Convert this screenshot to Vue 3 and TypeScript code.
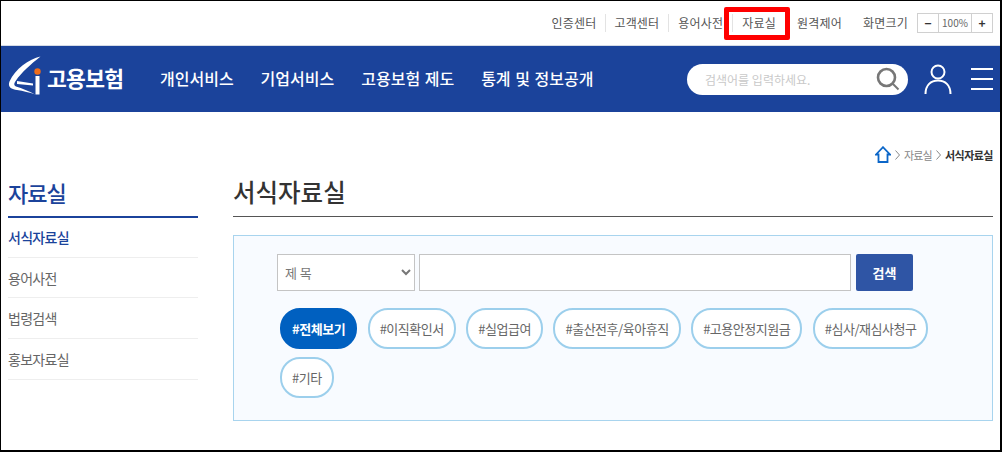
<script setup lang="ts">
const utils = [
  { label: '인증센터', cls: 'u1' },
  { label: '고객센터', cls: 'u2' },
  { label: '용어사전', cls: 'u3' },
  { label: '자료실', cls: 'u4' },
  { label: '원격제어', cls: 'u5' },
  { label: '화면크기', cls: 'u6' },
]
const navs = ['개인서비스', '기업서비스', '고용보험 제도', '통계 및 정보공개']
const sideItems = ['서식자료실', '용어사전', '법령검색', '홍보자료실']
const tags = ['#전체보기', '#이직확인서', '#실업급여', '#출산전후/육아휴직', '#고용안정지원금', '#심사/재심사청구', '#기타']
</script>

<template>
  <div class="page">
    <div class="util">
      <a v-for="u in utils" :key="u.label" class="util-item" :class="u.cls">{{ u.label }}</a>
      <div class="zoom">
        <span class="zb">−</span><span class="zv">100%</span><span class="zb">+</span>
      </div>
      <span class="redbox"></span>
    </div>
    <header class="head">
      <div class="logo">
        <svg class="mark" width="34" height="39" viewBox="0 0 34 39">
          <path d="M32.5 .5C21 3 7 13 1.5 25.5C-.5 31 3 33.5 9 34C15 35 22 36.5 27 38.5C21 35 14 32.5 8 30.5C5.5 29.5 6 27 8 24.5C13 17 23 8 32.5 .5Z" fill="#fff" />
          <path d="M9 25L25 27.5V29.5L9 28Z" fill="#fff" />
          <circle cx="29.5" cy="15.5" r="3.2" fill="#ef6c1a" />
          <rect x="27.5" y="20" width="4" height="18.5" fill="#fff" />
        </svg>
        <span class="logo-text">고용보험</span>
      </div>
      <nav class="nav">
        <a v-for="n in navs" :key="n">{{ n }}</a>
      </nav>
      <div class="search">
        <span class="ph">검색어를 입력하세요.</span>
        <svg width="24" height="24" viewBox="0 0 24 24" fill="none" stroke="#777" stroke-width="2.6">
          <circle cx="10.5" cy="10.5" r="8.5" />
          <path d="M17 17 L22.5 22.5" stroke-width="2" />
        </svg>
      </div>
      <svg class="user" width="28" height="30" viewBox="0 0 28 30" fill="none" stroke="#fff" stroke-width="2">
        <circle cx="14" cy="8" r="6.5" />
        <path d="M1.5 30 C 1.5 21 7 16.5 14 16.5 C 21 16.5 26.5 21 26.5 30" />
      </svg>
      <div class="burger"><i></i><i></i><i></i></div>
    </header>
    <div class="crumb">
      <svg width="16" height="17" viewBox="0 0 16 17" fill="none" stroke="#0b66c8" stroke-width="1.8">
        <path d="M1 8.5 L8 1.2 L15 8.5 H12.5 V16 H3.5 V8.5 Z" />
      </svg>
      <svg width="5" height="10" viewBox="0 0 5 10" fill="none" stroke="#888" stroke-width="1"><path d="M.5 .5L4.5 5L.5 9.5" /></svg>
      <span class="crumb-link">자료실</span>
      <svg width="5" height="10" viewBox="0 0 5 10" fill="none" stroke="#888" stroke-width="1"><path d="M.5 .5L4.5 5L.5 9.5" /></svg>
      <b>서식자료실</b>
    </div>
    <div class="body">
      <aside class="side">
        <h2>자료실</h2>
        <ul>
          <li v-for="(s, i) in sideItems" :key="s" :class="{ on: i === 0 }">{{ s }}</li>
        </ul>
      </aside>
      <main class="main">
        <h1>서식자료실</h1>
        <section class="panel">
          <div class="form">
            <select class="sel"><option>제 목</option></select>
            <input class="inp" type="text" />
            <button class="btn">검색</button>
          </div>
          <div class="tags">
            <a v-for="(t, i) in tags" :key="t" class="tag" :class="{ active: i === 0 }">{{ t }}</a>
          </div>
        </section>
      </main>
    </div>
  </div>
</template>

<style>
html, body { margin: 0; background: #fff; }
</style>

<style scoped>
.page {
  width: 1002px;
  height: 452px;
  box-sizing: border-box;
  border: 1px solid #000;
  border-bottom-width: 2px;
  border-right-width: 2px;
  overflow: hidden;
  background: #fff;
  font-family: "Noto Sans CJK KR", "Noto Sans", sans-serif;
  color: #555;
}
.util {
  position: relative;
  height: 44px;
  display: flex;
  align-items: center;
  justify-content: flex-end;
  padding-right: 7px;
  border-bottom: 1px solid #d5dbe6;
  box-sizing: content-box;
}
.util-item {
  font-size: 12px;
  letter-spacing: 0.2px;
  line-height: 18px;
  color: #555;
  white-space: nowrap;
}
.u1, .u2, .u3 { padding-right: 9px; margin-right: 9px; border-right: 1px solid #e3e3e3; }
.u1 { margin-right: 8px; }
.u4 { margin-right: 21px; }
.u5 { margin-right: 21px; }
.u6 { margin-right: 9px; }
.zoom {
  display: flex;
  height: 20px;
  width: 76px;
  box-sizing: border-box;
  border: 1px solid #d0d0d0;
  font-size: 10px;
  line-height: 18px;
  text-align: center;
}
.zb { width: 20px; color: #333; font-size: 12px; font-weight: 700; }
.zv { flex: 1; border-left: 1px solid #d0d0d0; border-right: 1px solid #d0d0d0; color: #666; }
.redbox {
  position: absolute;
  left: 723px;
  top: 6px;
  width: 66px;
  height: 33px;
  box-sizing: border-box;
  border: 5px solid #f00;
  border-radius: 2px;
}
.head {
  height: 66px;
  background: #1b439b;
  display: flex;
  align-items: center;
  padding-right: 7px;
}
.logo {
  display: flex;
  align-items: center;
  margin-left: 7px;
  width: 152px;
  flex: none;
}
.mark { margin-bottom: 7px; flex: none; }
.logo-text {
  color: #fff;
  font-size: 21.5px;
  font-weight: 700;
  letter-spacing: -0.7px;
  margin-left: 5px;
  margin-bottom: 2px;
  line-height: 30px;
}
.nav { display: flex; gap: 27px; margin-bottom: 2px; }
.nav a {
  color: #fff;
  font-size: 16px;
  font-weight: 500;
  word-spacing: 1px;
  white-space: nowrap;
}
.search {
  margin-left: auto;
  width: 221px;
  height: 31px;
  box-sizing: border-box;
  background: #fff;
  border-radius: 16px;
  display: flex;
  align-items: center;
  justify-content: space-between;
  padding: 0 8px 0 18px;
}
.ph { color: #c9c9c9; font-size: 12px; }
.user { margin-left: 16px; flex: none; }
.burger {
  margin-left: 19px;
  width: 22px;
  height: 22px;
  display: flex;
  flex-direction: column;
  justify-content: space-between;
}
.burger i { display: block; height: 2px; background: #fff; }
.crumb {
  height: 33px;
  margin-top: 26px;
  margin-bottom: 8px;
  padding-right: 7px;
  display: flex;
  align-items: center;
  justify-content: flex-end;
  gap: 4px;
  font-size: 11px;
  letter-spacing: -0.5px;
  color: #888;
}
.crumb-link { letter-spacing: -0.8px; }
.crumb b { color: #333; font-weight: 700; }
.body {
  display: flex;
  padding: 0 7px;
}
.side { width: 190px; flex: none; }
.side h2 {
  margin: 0;
  height: 37px;
  line-height: 26px;
  font-size: 22px;
  font-weight: 500;
  letter-spacing: -1px;
  color: #1b439b;
  border-bottom: 2px solid #1b439b;
}
.side ul { margin: -1px 0 0; padding: 0; list-style: none; }
.side li {
  height: 39.7px;
  line-height: 40px;
  border-bottom: 1px solid #eee;
  font-size: 14px;
  letter-spacing: -0.7px;
  color: #666;
}
.side li.on { color: #1b439b; font-weight: 500; }
.main { margin-left: 35px; width: 760px; flex: none; }
.main h1 {
  margin: 0;
  height: 38px;
  line-height: 26px;
  font-size: 24.5px;
  font-weight: 500;
  color: #333;
  border-bottom: 1px solid #555;
  box-sizing: border-box;
}
.panel {
  margin-top: 18px;
  height: 186px;
  box-sizing: border-box;
  background: #f8fbff;
  border: 1px solid #a8d4ee;
  padding: 18px 43px 0;
}
.form { display: flex; height: 37px; }
.sel {
  width: 138px;
  height: 37px;
  box-sizing: border-box;
  border: 1px solid #c4c4c4;
  background: #fff;
  color: #777;
  font-family: inherit;
  font-size: 13px;
  padding-left: 3px;
  border-radius: 0;
}
.inp {
  width: 432px;
  margin-left: 4px;
  height: 37px;
  box-sizing: border-box;
  border: 1px solid #c4c4c4;
  background: #fff;
  padding: 0;
}
.btn {
  width: 57px;
  height: 37px;
  margin-left: 5px;
  background: #2f55a5;
  border: 0;
  border-radius: 2px;
  color: #fff;
  font-family: inherit;
  font-size: 13px;
  font-weight: 700;
  padding: 0;
}
.tags {
  margin-top: 17px;
  margin-left: 3px;
  display: flex;
  flex-wrap: wrap;
  gap: 8px 10.5px;
}
.tag {
  height: 41px;
  box-sizing: border-box;
  padding: 0 10px;
  background: #fff;
  border: 2px solid #9ccfec;
  border-radius: 20px;
  font-size: 13px;
  letter-spacing: -0.48px;
  line-height: 37px;
  color: #666;
  white-space: nowrap;
}
.tag.active {
  background: #0060c0;
  border-color: #0060c0;
  color: #fff;
  font-weight: 700;
}
</style>
